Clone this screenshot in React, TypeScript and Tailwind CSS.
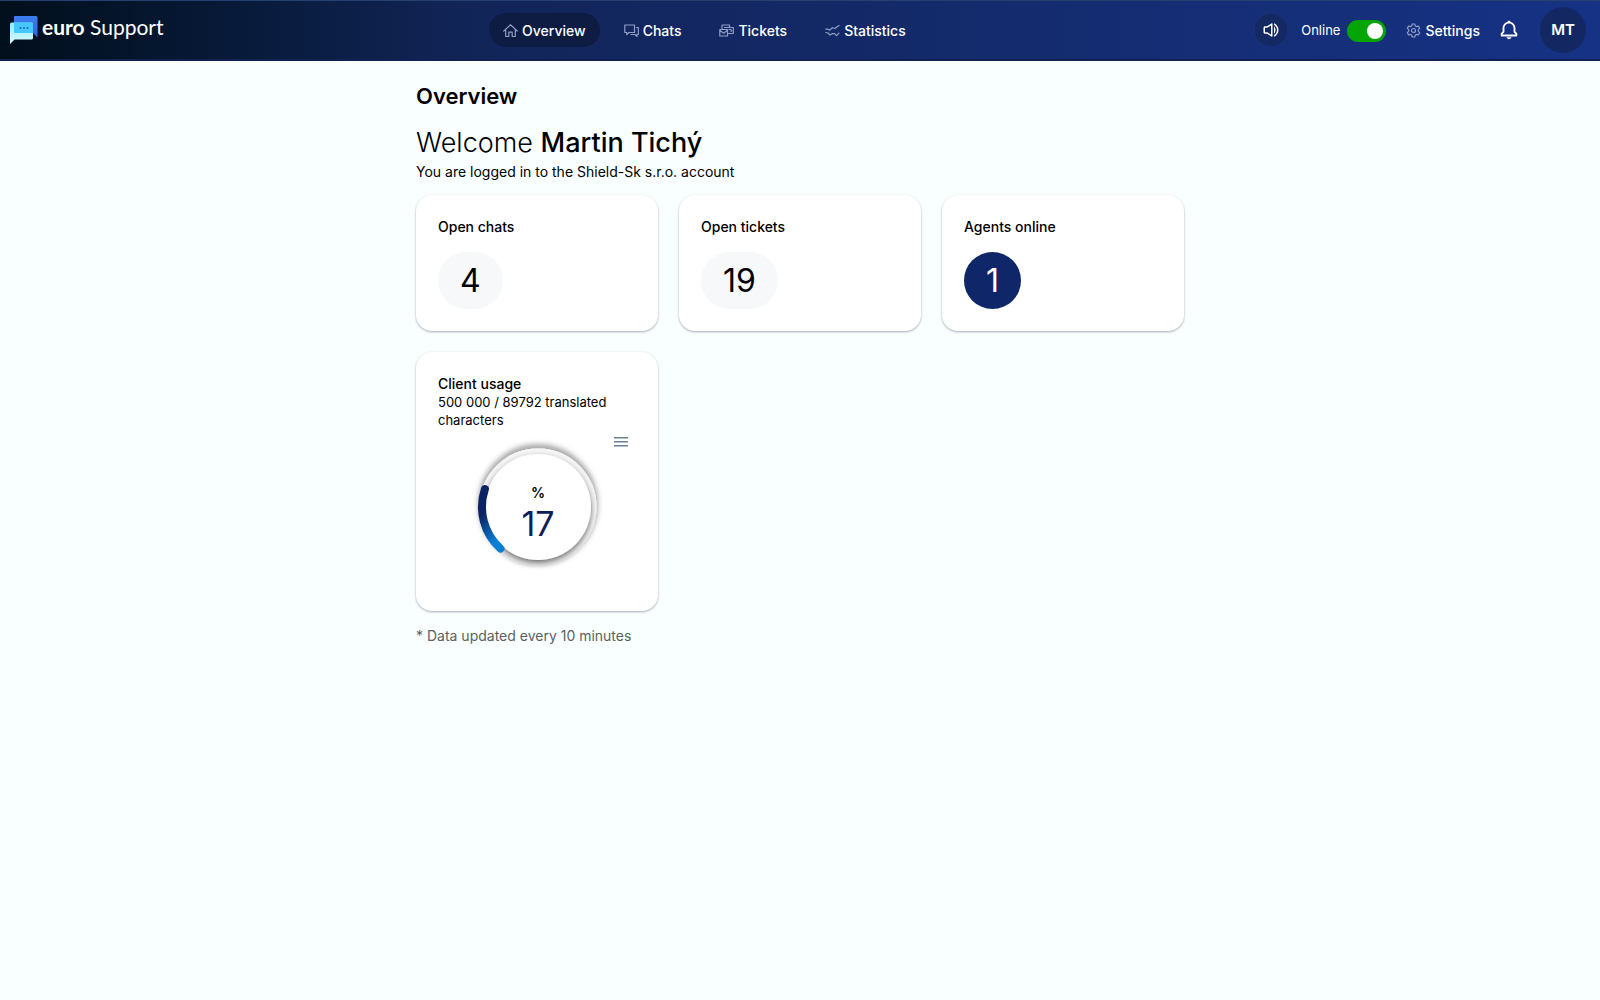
import React from "react";
import { BiBell, BiVolumeFull } from "react-icons/bi";

function LogoMark() {
  return (
    <svg width="28" height="28" viewBox="0 0 28 28" aria-hidden="true">
      <defs>
        <linearGradient id="bubbleBack" x1="0" y1="0" x2="0" y2="1">
          <stop offset="0" stopColor="#3b7df0" />
          <stop offset="1" stopColor="#2b68dc" />
        </linearGradient>
        <linearGradient id="bubbleFront" x1="0" y1="0" x2="0" y2="1">
          <stop offset="0" stopColor="#8fe9fd" />
          <stop offset="1" stopColor="#d8fcff" />
        </linearGradient>
      </defs>
      <path d="M5 0h21a1.500 1.500 0 0 1 1.500 1.500v20L23 17H5a1 1 0 0 1-1-1V1a1 1 0 0 1 1-1z" fill="url(#bubbleBack)" />
      <path d="M1.500 6.500h20A1.500 1.500 0 0 1 23 8v14a1.500 1.500 0 0 1-1.500 1.500H4.500L0 28V8a1.500 1.500 0 0 1 1.500-1.500z" fill="url(#bubbleFront)" />
      <path d="M4 6.500h17.500A1.500 1.500 0 0 1 23 8v9H5a1 1 0 0 1-1-1z" fill="#45c8fb" />
      <g fill="#1768b8">
        <circle cx="10.500" cy="12" r="1" />
        <circle cx="14" cy="12" r="1" />
        <circle cx="17.500" cy="12" r="1" />
      </g>
    </svg>
  );
}

function LineIcon({ children }: { children: React.ReactNode }) {
  return (
    <svg
      width="15"
      height="15"
      viewBox="0 0 15 15"
      fill="none"
      stroke="currentColor"
      strokeWidth="1.200"
      strokeLinejoin="round"
      strokeLinecap="round"
      className="shrink-0 text-[#8f9dc4]"
      aria-hidden="true"
    >
      {children}
    </svg>
  );
}

const HomeIcon = () => (
  <LineIcon>
    <path d="M.8 8 7.500 1.800 14.200 8M2.700 6.600v6.900h3.100V9.200h3.400v4.300h3.100V6.600" />
  </LineIcon>
);

const ChatsIcon = () => (
  <LineIcon>
    <path d="M.8 2h9.700v7.500H5L2.800 11.700V9.500h-2zM12.500 4.500h1.800v7h-1.300v2l-2-2H7" />
  </LineIcon>
);

const TicketsIcon = () => (
  <LineIcon>
    <path d="M.8 6.500h7.700v6.500H.8zM.8 7.200l3.800 3 3.900-3M3 6.500V2h7.500v2.500M5.500 4.500h8.800v6h-5.800M10 6.500h2.200v2" />
  </LineIcon>
);

const StatsIcon = () => (
  <LineIcon>
    <path d="M.8 6.200H3l1.500 1 3-2.500 2.500.8L12 3.800l2-1.300M.8 9.500 3 10l2 2 2.500-1.500 2 .2 2 2 2.500-2.500" />
  </LineIcon>
);

const GearIcon = () => (
  <LineIcon>
    <path d="M6.200 1h2.600l.5 1.900 1.200.7 1.900-.5 1.300 2.200-1.400 1.400v1.600l1.400 1.400-1.300 2.200-1.900-.5-1.200.7-.5 1.900H6.200l-.5-1.900-1.200-.7-1.900.5-1.300-2.200 1.400-1.400V6.700L1.300 5.300l1.300-2.200 1.900.5 1.200-.7z" />
    <circle cx="7.500" cy="7.500" r="2" />
  </LineIcon>
);

const navItems = [
  { label: "Overview", icon: <HomeIcon />, active: true },
  { label: "Chats", icon: <ChatsIcon />, active: false },
  { label: "Tickets", icon: <TicketsIcon />, active: false },
  { label: "Statistics", icon: <StatsIcon />, active: false },
];

function Header() {
  return (
    <header className="flex h-[61px] items-center justify-between border-t border-b-2 border-t-[#26406f] border-b-[#122250] bg-linear-to-r from-[#020f1c] via-[#122559] via-30% to-[#163285] pr-3.5 pl-2.5 text-white">
      <a href="#" className="flex items-start gap-1 pb-px text-[21px] leading-[22px]">
        <LogoMark />
        <span className="font-[Lato,sans-serif]">
          <b className="font-bold">euro</b> Support
        </span>
      </a>

      <nav className="mr-2.5 flex items-center gap-2.5">
        {navItems.map((item) => (
          <a
            key={item.label}
            href="#"
            className={`flex h-[34px] items-center gap-1 rounded-full px-3.5 text-[14px] font-medium ${
              item.active ? "bg-[#0e1c43]" : ""
            }`}
          >
            {item.icon}
            {item.label}
          </a>
        ))}
      </nav>

      <div className="flex items-center">
        <button aria-label="Sound" className="flex size-8 items-center justify-center rounded-full bg-[#142861]">
          <BiVolumeFull size={18} />
        </button>
        <label className="ml-3.5 flex items-center gap-[7px] pt-px text-[13px]">
          Online
          <input type="checkbox" role="switch" defaultChecked className="peer sr-only" />
          <span className="flex h-[22px] w-[39px] items-center justify-end rounded-full bg-[#06a506] px-[3px]">
            <span className="size-4 rounded-full bg-white" />
          </span>
        </label>
        <a href="#" className="ml-5 flex items-center gap-1 text-[14px] font-medium">
          <GearIcon />
          Settings
        </a>
        <button aria-label="Notifications" className="ml-[18px]">
          <BiBell size={22} />
        </button>
        <button className="ml-5 flex size-[46px] items-center justify-center rounded-full bg-[#132863] text-[15px] font-semibold">
          MT
        </button>
      </div>
    </header>
  );
}

function Card({ title, children }: { title: string; children: React.ReactNode }) {
  return (
    <section className="rounded-2xl bg-white p-[22px] shadow-[0_1px_3px_rgba(0,0,0,0.12),0_1px_2px_rgba(20,20,60,0.24)]">
      <h2 className="text-[14px] leading-[19px] font-medium">{title}</h2>
      {children}
    </section>
  );
}

function Stat({ title, value, highlight }: { title: string; value: number; highlight?: boolean }) {
  return (
    <Card title={title}>
      <div
        className={`mt-4 inline-block rounded-full px-[22px] py-2 align-top text-[32px] leading-[41px] ${
          highlight ? "bg-[#0f2769] text-white" : "bg-[#f7f8fa]"
        }`}
      >
        {value}
      </div>
    </Card>
  );
}

function polar(r: number, degrees: number) {
  const a = ((degrees - 90) * Math.PI) / 180;
  return `${(r * Math.cos(a)).toFixed(2)} ${(r * Math.sin(a)).toFixed(2)}`;
}

function UsageGauge({ used, total }: { used: number; total: number }) {
  const share = used / total;
  const percent = Math.floor(share * 100);
  const start = -138;
  const end = start + share * 360 + 2;
  return (
    <svg width="140" height="140" viewBox="-70 -70 140 140" role="img" aria-label={`${percent} %`}>
      <defs>
        <linearGradient id="usage" x1="0" y1="0" x2="0.3" y2="1">
          <stop offset="0.4" stopColor="#0b2362" />
          <stop offset="1" stopColor="#0a7fd6" />
        </linearGradient>
        <filter id="trackShadow" x="-20%" y="-20%" width="140%" height="140%">
          <feDropShadow dx="0" dy="-3" stdDeviation="3" floodColor="#000" floodOpacity="0.55" />
        </filter>
        <filter id="hollowShadow" x="-20%" y="-20%" width="140%" height="140%">
          <feDropShadow dx="0" dy="3" stdDeviation="3" floodColor="#000" floodOpacity="0.55" />
        </filter>
      </defs>
      <circle r="56" fill="none" stroke="#f6f6f6" strokeWidth="5" filter="url(#trackShadow)" />
      <circle r="53" fill="#fff" filter="url(#hollowShadow)" />
      <path
        d={`M${polar(56, start)}A56 56 0 0 1 ${polar(56, end)}`}
        fill="none"
        stroke="url(#usage)"
        strokeWidth="8"
        strokeLinecap="round"
      />
      <text y="-9" textAnchor="middle" className="fill-black font-[Inter,sans-serif] text-[14px] font-semibold">
        %
      </text>
      <text y="29" textAnchor="middle" className="fill-[#0b1f5c] font-[Inter,sans-serif] text-[34px]">
        {percent}
      </text>
    </svg>
  );
}

export default function App() {
  return (
    <div className="min-h-screen bg-[#f9ffff] font-[Inter,sans-serif] text-black">
      <Header />
      <main className="mx-auto max-w-3xl pt-[19px] pb-10">
        <h1 className="text-[22px] leading-8 font-semibold">Overview</h1>
        <p className="mt-[13px] text-[27px] leading-9 font-light">
          Welcome <b className="font-medium">Martin Tichý</b>
        </p>
        <p className="mt-px text-[14px] leading-5">You are logged in to the Shield-Sk s.r.o. account</p>

        <div className="mt-[13px] grid grid-cols-3 gap-[21px]">
          <Stat title="Open chats" value={4} />
          <Stat title="Open tickets" value={19} />
          <Stat title="Agents online" value={1} highlight />
          <Card title="Client usage">
            <p className="text-[13px] leading-[18px]">500 000 / 89792 translated characters</p>
            <div className="relative flex h-40 justify-center pt-2 pl-0.5">
              <UsageGauge used={89792} total={500000} />
              <button aria-label="Chart menu" className="absolute top-2 right-2 text-[#6e8192]">
                <svg width="14" height="10" viewBox="0 0 14 10" fill="currentColor" aria-hidden="true">
                  <path d="M0 0h14v1.500H0zM0 4h14v1.500H0zM0 8h14v1.500H0z" />
                </svg>
              </button>
            </div>
          </Card>
        </div>
        <p className="mt-[15px] text-[14px] leading-5 text-[#5a5f60]">* Data updated every 10 minutes</p>
      </main>
    </div>
  );
}
